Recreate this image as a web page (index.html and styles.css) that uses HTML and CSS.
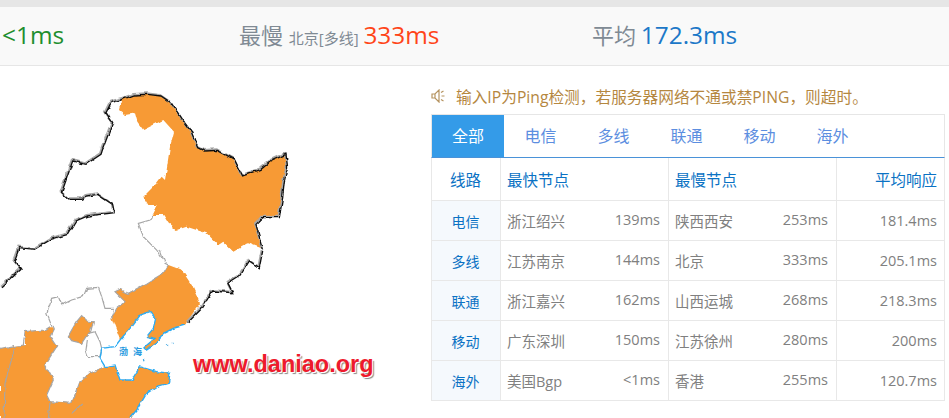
FILE: index.html
```html
<!DOCTYPE html>
<html>
    <head>
        <title>Ping</title>
        <link rel="stylesheet" href="styles.css">
    </head>
    <body>
        <div class="topline"></div>
        <div class="stats">
            <div class="stat stat-fast"><span class="num green">&lt;1ms</span></div>
            <div class="stat stat-slow"><span class="label">最慢</span> <span class="where">北京[多线]</span> <span class="num red">333ms</span></div>
            <div class="stat stat-avg"><span class="label">平均</span> <span class="num blue">172.3ms</span></div>
        </div>
        <div class="main">
            <div class="map">
                <svg class="map-svg" viewBox="0 66 430 352" width="430" height="352">
                    <defs>
                        <filter id="rough" filterUnits="userSpaceOnUse" x="0" y="66" width="430" height="352">
                            <feTurbulence type="fractalNoise" baseFrequency="0.14" numOctaves="2" seed="4"/>
                            <feDisplacementMap in="SourceGraphic" scale="4" xChannelSelector="R" yChannelSelector="G"/>
                        </filter>
                    </defs>
                    <g filter="url(#rough)">
                        <g transform="translate(0 80) scale(.33333)">
                            <path class="land" d="M365 55L400 42L440 40L480 45L510 65L540 110L570 150L590 200L610 210L650 208L700 235L725 285L780 265L810 240L855 220L860 260L850 300L845 350L835 410L785 410L765 430L785 505L745 490L700 515L670 485L655 495L620 460L590 450L560 440L530 450L505 430L490 405L455 405L470 375L445 375L430 350L470 310L485 290L495 300L510 200L522 155L490 120L460 135L430 150L412 125L405 100L375 105L357 90Z"/>
                            <path class="inner" d="M455 405L450 420L415 430L430 470L470 510L490 540"/>
                            <path class="edge-grey" d="M0 620L60 565L40 540L55 500L100 505L150 475L200 460L225 420L260 405L340 395L335 370L290 340L260 345L240 355L205 355L182 335L215 240L255 250L300 220L305 205L335 125L315 95L330 65L365 55L400 42L440 40L480 45L510 65L540 110L570 150L590 200L610 210L650 208L700 235L725 285L780 265L810 240L855 220L860 260L850 300L845 350L835 410L785 410L765 430L785 505"/>
                            <path class="edge-black" d="M0 620L60 565L40 540L55 500L100 505L150 475L200 460L225 420L260 405L340 395L335 370L290 340L260 345L240 355L205 355L182 335L215 240L255 250L300 220L305 205L335 125L315 95L330 65L365 55L400 42L440 40L480 45L510 65L540 110L570 150L590 200L610 210L650 208L700 235L725 285L780 265L810 240L855 220L860 260L850 300L845 350L835 410L785 410L765 430L785 505"/>
                        </g>
                        <g transform="translate(0 250) scale(.33333)">
                            <path class="land" d="M505 45L545 60L575 105L600 160L575 195L555 225L520 235L490 250L470 280L440 300L435 290L465 265L440 260L460 235L467 205L450 185L420 195L390 235L360 270L335 205L350 175L375 155L345 125L360 118L385 130L440 100L490 70Z"/>
                            <path class="land" d="M245 197L262 213L280 215L272 245L258 260L245 280L215 272L205 258L215 240L230 215Z"/>
                            <path class="land" d="M0 295L45 287L75 285L75 245L135 240L150 230L160 240L150 260L170 290L135 345L160 390L140 435L150 455L215 460L240 395L270 370L310 350L345 345L360 390L395 390L420 350L470 365L510 370L505 400L470 410L440 430L410 480L390 510L0 510Z"/>
                            <path class="inner" d="M315 350L270 370L240 395L215 460L150 455L140 435L160 390L135 345L170 290L150 260L160 240L140 190L155 145L175 140L185 165L215 150L250 140L260 115L295 112L305 140L315 175L340 175L335 205L350 175L375 155L345 125L360 118L385 130L440 100L490 70L505 45L495 40L480 0"/>
                            <path class="inner" d="M245 197L262 213L280 215L272 245L258 260L245 280L215 272L205 258L215 240L230 215Z"/>
                            <path class="inner" d="M265 250L285 245L300 275L305 295L300 320L265 320L258 300L262 270"/>
                            <path class="inner" d="M150 230L135 240L75 245L70 285L45 290L15 400L12 510M0 295L45 287M150 455L145 510M245 462L215 490"/>
                            <path class="edge-grey" d="M785 0L775 50L745 30L720 70L680 95L695 125L635 120L600 175L560 215"/>
                            <path class="edge-black" d="M785 0L775 50L745 30L720 70L680 95L695 125L635 120L600 175L560 215"/>
                            <path class="coast" d="M555 225L520 235L490 250L470 280L440 300L435 290L465 265L440 260L460 235L467 205L450 185L420 195L390 235L360 270L345 290L305 295L300 325L315 350L345 345L360 390L395 390L420 350L470 365L510 370L505 400L470 410L440 430L410 480L390 504"/>
                            <path class="isles" d="M428 328l6-2l-2 6zM500 282l5-1l-1 5zM514 278l4 0l0 5z"/>
                        </g>
                    </g>
                    <text class="sea" x="119" y="355">渤</text>
                    <text class="sea" x="133" y="355">海</text>
                </svg>
                <span class="watermark">www.daniao.org</span>
            </div>
            <div class="side">
                <div class="tip">
                    <svg class="tip-icon" viewBox="0 0 14 14" width="14" height="14">
                        <path d="M1 5h3l4-4v12l-4-4H1zM4 5v4"/>
                        <path d="M10 3.500l2.500-1.500M10.500 7h3M10 10.500l2.500 1.500"/>
                    </svg>
                    <span>输入IP为Ping检测，若服务器网络不通或禁PING，则超时。</span>
                </div>
                <div class="tabs">
                    <a class="tab active">全部</a>
                    <a class="tab">电信</a>
                    <a class="tab">多线</a>
                    <a class="tab">联通</a>
                    <a class="tab">移动</a>
                    <a class="tab">海外</a>
                </div>
                <table class="ping">
                    <thead>
                        <tr>
                            <th class="col-line">线路</th>
                            <th class="col-node">最快节点</th>
                            <th class="col-node">最慢节点</th>
                            <th class="col-avg">平均响应</th>
                        </tr>
                    </thead>
                    <tbody>
                        <tr>
                            <td class="line">电信</td>
                            <td><div class="node"><span>浙江绍兴</span><span>139ms</span></div></td>
                            <td><div class="node"><span>陕西西安</span><span>253ms</span></div></td>
                            <td class="avg">181.4ms</td>
                        </tr>
                        <tr>
                            <td class="line">多线</td>
                            <td><div class="node"><span>江苏南京</span><span>144ms</span></div></td>
                            <td><div class="node"><span>北京</span><span>333ms</span></div></td>
                            <td class="avg">205.1ms</td>
                        </tr>
                        <tr>
                            <td class="line">联通</td>
                            <td><div class="node"><span>浙江嘉兴</span><span>162ms</span></div></td>
                            <td><div class="node"><span>山西运城</span><span>268ms</span></div></td>
                            <td class="avg">218.3ms</td>
                        </tr>
                        <tr>
                            <td class="line">移动</td>
                            <td><div class="node"><span>广东深圳</span><span>150ms</span></div></td>
                            <td><div class="node"><span>江苏徐州</span><span>280ms</span></div></td>
                            <td class="avg">200ms</td>
                        </tr>
                        <tr>
                            <td class="line">海外</td>
                            <td><div class="node"><span>美国Bgp</span><span>&lt;1ms</span></div></td>
                            <td><div class="node"><span>香港</span><span>255ms</span></div></td>
                            <td class="avg">120.7ms</td>
                        </tr>
                    </tbody>
                </table>
            </div>
        </div>
    </body>
</html>
```

FILE: styles.css
```css
html, body{
    margin: 0;
    padding: 0;
    height: 418px;
    overflow: hidden;
    background: #fff;
}
body{
    font-family: "Open Sans", "Noto Sans CJK SC", sans-serif;
    font-size: 14.500px;
    color: #808080;
}

.topline{
    height: 7px;
    background: #e6e6e6;
}
.stats{
    display: flex;
    align-items: center;
    height: 55px;
    padding-bottom: 3px;
    background: #f9f9f9;
    border-bottom: 1px solid #e6e6e6;
}
.stat{
    white-space: nowrap;
}
.stat-fast{
    width: 239px;
    padding-left: 2px;
    box-sizing: border-box;
}
.stat-slow{
    width: 353px;
}
.label{
    font-size: 22px;
    color: #808a94;
}
.where{
    font-size: 15px;
    color: #808a94;
    margin-left: 2px;
}
.num{
    font-size: 24.400px;
    margin-left: 1px;
}
.stat-fast .num{
    margin-left: 0;
}
.green{
    color: #1e8e2e;
}
.red{
    color: #ff4518;
}
.blue{
    color: #1c78c8;
}

.main{
    display: flex;
}
.map{
    position: relative;
    width: 431px;
    height: 352px;
    flex: none;
}
.map-svg{
    display: block;
}
.land{
    fill: #f79a35;
}
.inner{
    fill: none;
    stroke: #a6a6a6;
    stroke-width: 3.500;
}
.edge-grey{
    fill: none;
    stroke: #a8a8a8;
    stroke-width: 6;
}
.edge-black{
    fill: none;
    stroke: #111;
    stroke-width: 4;
    transform: translate(3px, 3px);
}
.coast{
    fill: none;
    stroke: #2cabf2;
    stroke-width: 4;
}
.isles{
    fill: #35a0e0;
}
.sea{
    font-family: "Noto Sans CJK SC", sans-serif;
    font-size: 9px;
    font-weight: bold;
    fill: #2a9be0;
}
.watermark{
    position: absolute;
    left: 193px;
    top: 285px;
    font-family: "Liberation Sans", sans-serif;
    font-size: 23.500px;
    font-weight: bold;
    color: #ee1a2c;
    text-shadow: 1px 1px 0 #fff, 2px 2px 1px #888;
}

.side{
    width: 514px;
    flex: none;
}
.tip{
    display: flex;
    align-items: center;
    gap: 11px;
    height: 48px;
    padding-top: 12px;
    box-sizing: border-box;
    font-size: 15.700px;
    color: #b5873f;
    white-space: nowrap;
}
.tip-icon{
    flex: none;
    fill: none;
    stroke: #b5935f;
    stroke-width: 1.200;
}
.tabs{
    display: flex;
    height: 44px;
    box-sizing: border-box;
    border-top: 1px solid #e6e6e6;
    border-left: 1px solid #e6e6e6;
    border-right: 1px solid #e6e6e6;
    border-bottom: 1px solid #4a92d8;
}
.tab{
    width: 73px;
    line-height: 42px;
    text-align: center;
    font-size: 16px;
    color: #5c8ee0;
}
.tab.active{
    width: 72px;
    background: #349be8;
    color: #fff;
}
.ping{
    width: 514px;
    border-collapse: collapse;
    table-layout: fixed;
}
.ping th, .ping td{
    border: 1px solid #e8e8e8;
    padding: 0 7px 0 6px;
    height: 39px;
    font-weight: normal;
}
.ping th{
    height: 42px;
    font-size: 15.500px;
    color: #0a72c4;
    text-align: left;
}
.ping th.col-line{
    width: 55px;
    text-align: center;
    border-top: 0;
}
.ping th.col-node{
    width: 154px;
    border-top: 0;
}
.ping th.col-avg{
    text-align: right;
    border-top: 0;
}
.ping td.line{
    background: #f5f9fd;
    color: #0a72c4;
    font-size: 14px;
    text-align: center;
}
.node{
    display: flex;
    justify-content: space-between;
    margin-right: 1px;
}
.avg{
    text-align: right;
}
```
